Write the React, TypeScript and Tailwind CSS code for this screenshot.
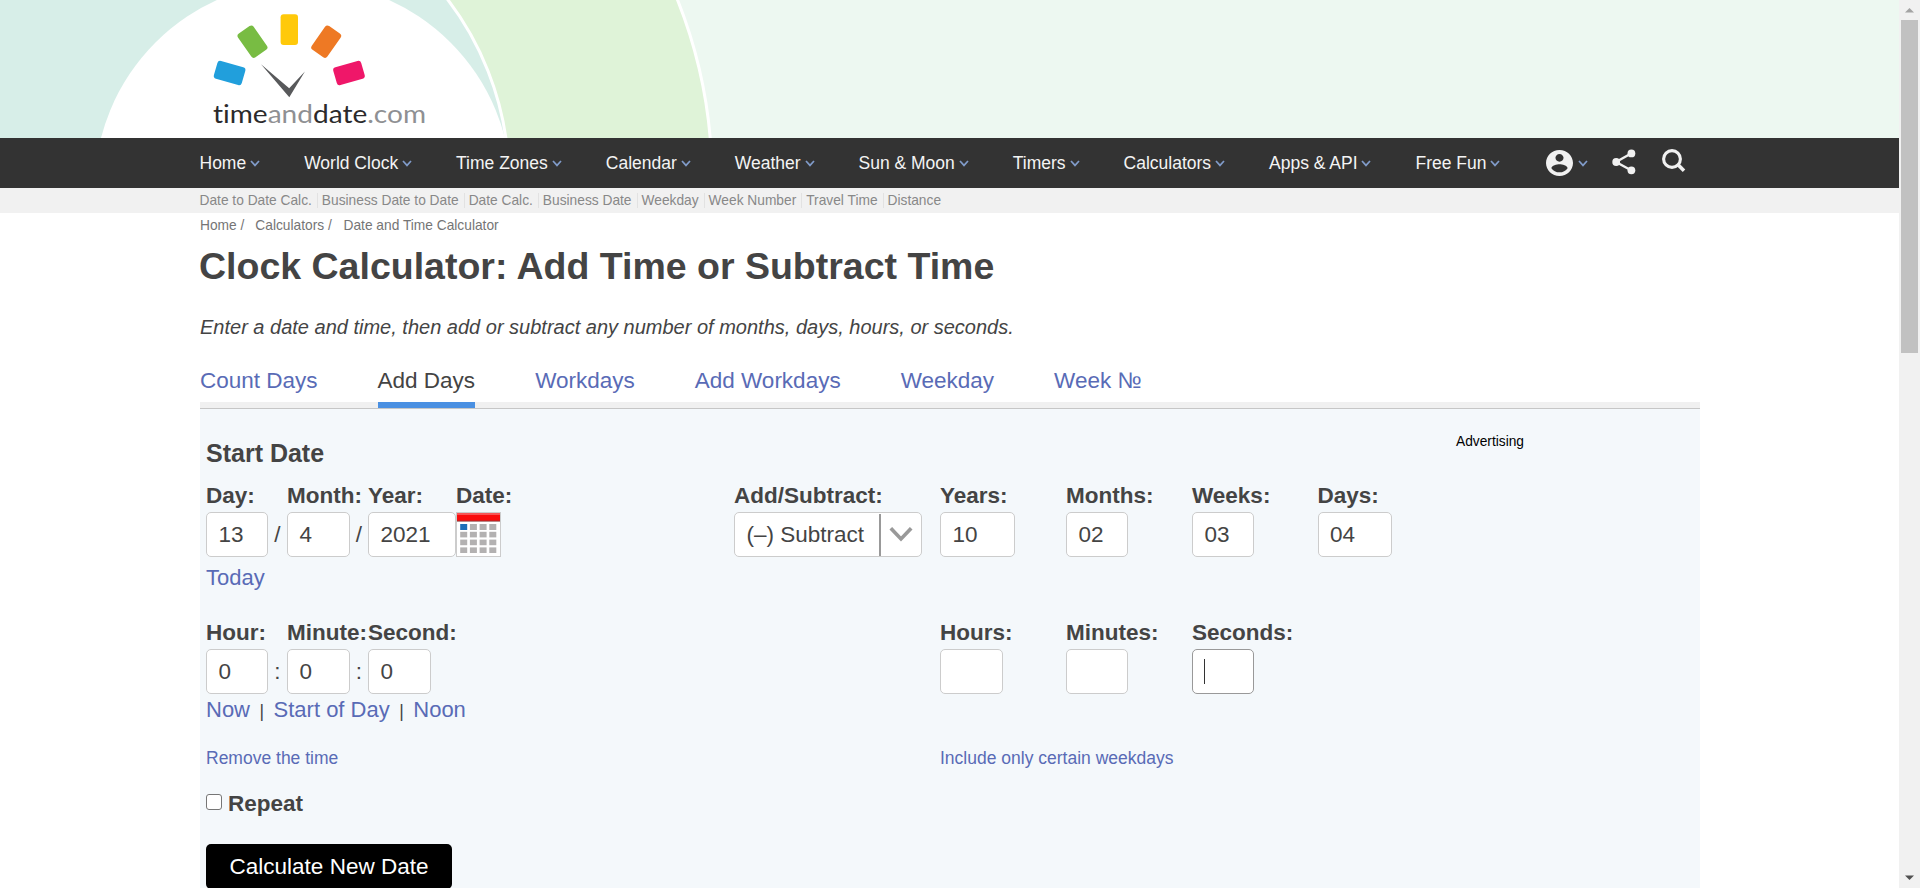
import React from "react";

const NAV = [
  "Home",
  "World Clock",
  "Time Zones",
  "Calendar",
  "Weather",
  "Sun & Moon",
  "Timers",
  "Calculators",
  "Apps & API",
  "Free Fun",
];

const SUBNAV = [
  "Date to Date Calc.",
  "Business Date to Date",
  "Date Calc.",
  "Business Date",
  "Weekday",
  "Week Number",
  "Travel Time",
  "Distance",
];

const TABS = ["Count Days", "Add Days", "Workdays", "Add Workdays", "Weekday", "Week №"];

function Caret() {
  return (
    <svg width="10" height="7" viewBox="0 0 10 7" className="shrink-0">
      <path d="M1 1 L5 5.4 L9 1" fill="none" stroke="#809bc9" strokeWidth="1.7" />
    </svg>
  );
}

function Banner() {
  return (
    <svg width="1899" height="138" viewBox="0 0 1899 138" className="block shrink-0">
      <rect width="1899" height="138" fill="#edf8f1" />
      <circle cx="224" cy="180" r="488" fill="#dff3d8" stroke="#ffffff" strokeWidth="3" />
      <circle cx="210" cy="181" r="299" fill="#d7eee8" stroke="#ffffff" strokeWidth="3" />
      <circle cx="303" cy="190" r="208.6" fill="#ffffff" />
      <rect x="280.6" y="14.3" width="17.4" height="30.6" rx="3" fill="#ffc90a" />
      <rect x="-9.5" y="-14.5" width="19" height="29" rx="3" fill="#78bc43" transform="translate(252.5 41.7) rotate(-35)" />
      <rect x="-9.5" y="-14.5" width="19" height="29" rx="3" fill="#ee7924" transform="translate(326.2 41.7) rotate(35)" />
      <rect x="-14.5" y="-9.3" width="29" height="18.6" rx="3" fill="#219fdc" transform="translate(229.6 73) rotate(16)" />
      <rect x="-14.5" y="-9.3" width="29" height="18.6" rx="3" fill="#ef1769" transform="translate(349 73) rotate(-16)" />
      <path d="M261 64.3 L289.2 88.3 L304.9 71.5 L289.3 97.2 Z" fill="#58595b" />
      <text
        x="213"
        y="122.6"
        fontFamily="Lato, sans-serif"
        fontSize="24.5"
        textLength="213"
        lengthAdjust="spacingAndGlyphs"
        className="[font-variant-ligatures:none]"
      >
        <tspan fill="#2b2a2b">time</tspan>
        <tspan fill="#8f9093">and</tspan>
        <tspan fill="#2b2a2b">date</tspan>
        <tspan fill="#8f9093">.com</tspan>
      </text>
    </svg>
  );
}

function Field({
  label,
  value,
  cell,
  box,
  focused,
  suffix,
}: {
  label: string;
  value: string;
  cell: string;
  box: string;
  focused?: boolean;
  suffix?: string;
}) {
  return (
    <div className={`shrink-0 ${cell}`}>
      <div className="h-[33px] leading-[33px] font-bold whitespace-nowrap">{label}</div>
      <div className="flex items-center">
        <div
          className={`flex h-[45px] items-center rounded-[5px] border bg-white pl-[11.5px] ${box} ${
            focused ? "border-[#999]" : "border-[#ccc]"
          }`}
        >
          {focused ? <span className="-ml-px h-[25px] w-px bg-[#333]" /> : value}
        </div>
        {suffix && <span className="flex-1 text-center">{suffix}</span>}
      </div>
    </div>
  );
}

function CalendarIcon() {
  const cells = [0, 1, 2, 3];
  return (
    <svg width="45" height="45" viewBox="0 0 45 45" className="block">
      <rect x="0.5" y="0.5" width="44" height="44" fill="#fff" stroke="#ccc" />
      <rect x="1" y="1" width="43" height="8" fill="#f90d0d" />
      <rect x="1" y="1" width="43" height="2" fill="#f95555" />
      <rect x="1" y="8.6" width="43" height="1" fill="#8b3a3a" />
      {cells.map((r) =>
        cells.map((c) => (
          <rect
            key={`${r}-${c}`}
            x={4.2 + c * 9.7}
            y={12 + r * 7.8}
            width="7"
            height={r === 0 ? 6 : 5.6}
            fill={r === 0 && c === 0 ? "#1d6fb8" : "#b3b1b1"}
          />
        ))
      )}
    </svg>
  );
}

export default function App() {
  return (
    <div className="flex h-[888px] w-[1920px] overflow-hidden bg-white font-['Liberation_Sans',Arial,sans-serif] text-[#444]">
      <div className="flex w-[1899px] shrink-0 flex-col">
        <Banner />
        <nav className="flex h-[50px] shrink-0 items-center gap-11 bg-[#333] pl-[199.5px] text-[17.5px] text-[#f4f4f4]">
          {NAV.map((n) => (
            <div key={n} className="flex items-center gap-[3.95px] whitespace-nowrap">
              {n}
              <Caret />
            </div>
          ))}
          <div className="ml-[1.5px] flex items-center gap-[5px]">
            <svg width="27" height="26" viewBox="2 2 20 20" preserveAspectRatio="none" fill="#f1f1f1">
              <path d="M12 2C6.48 2 2 6.48 2 12s4.48 10 10 10 10-4.48 10-10S17.52 2 12 2zm0 3c1.66 0 3 1.34 3 3s-1.34 3-3 3-3-1.34-3-3 1.34-3 3-3zm0 14.2c-2.5 0-4.71-1.28-6-3.22.03-1.99 4-3.08 6-3.08 1.99 0 5.97 1.09 6 3.08-1.29 1.94-3.5 3.22-6 3.22z" />
            </svg>
            <Caret />
          </div>
          <svg width="24" height="26" viewBox="0 0 24 26" className="-mt-[3px] -ml-5" fill="#f1f1f1">
            <path d="M4 13 L19.5 4.2 M4 13 L19.5 21.5" stroke="#f1f1f1" strokeWidth="2.4" />
            <circle cx="4.2" cy="13" r="3.9" />
            <circle cx="19.4" cy="4.4" r="3.9" />
            <circle cx="19.4" cy="21.3" r="3.9" />
          </svg>
          <svg width="24" height="24" viewBox="0 0 24 24" className="-mt-1 -ml-[18px]" fill="none" stroke="#f1f1f1">
            <circle cx="10" cy="10" r="8.4" strokeWidth="3.1" />
            <path d="M15.8 15.6 L22 21.8" strokeWidth="3.6" />
          </svg>
        </nav>
        <div className="flex h-[25px] shrink-0 items-center bg-[#f1f1f1] pl-[199.5px] text-[13.75px] text-[#888]">
          {SUBNAV.map((s, i) => (
            <span
              key={s}
              className={
                i < SUBNAV.length - 1
                  ? "mr-1 border-r-[1.5px] border-[#e2e2e2] pr-[5px] leading-[15px] whitespace-nowrap"
                  : "leading-[15px] whitespace-nowrap"
              }
            >
              {s}
            </span>
          ))}
        </div>
        <main className="ml-[200px] flex w-[1500px] flex-1 flex-col">
          <div className="flex h-[25px] shrink-0 items-center pt-px text-[13.75px] text-[#757575]">
            <span>Home /</span>
            <span className="ml-[11px]">Calculators /</span>
            <span className="ml-[11.75px]">Date and Time Calculator</span>
          </div>
          <h1 className="-ml-px h-[57px] shrink-0 text-[37.5px] leading-[57px] font-bold">
            Clock Calculator: Add Time or Subtract Time
          </h1>
          <p className="mt-3 h-10 shrink-0 text-[20px] leading-10 italic">
            Enter a date and time, then add or subtract any number of months, days, hours, or seconds.
          </p>
          <div className="mt-[14px] flex h-[48px] shrink-0 gap-[60px] border-b border-[#c6c6c6] text-[22.5px] leading-[40px] text-[#596bb6] shadow-[inset_0_-6px_0_#f0f0f0]">
            {TABS.map((t) => (
              <span
                key={t}
                className={
                  t === "Add Days"
                    ? "h-[47px] border-b-[6px] border-[#4a90e2] whitespace-nowrap text-[#444]"
                    : "h-[47px] whitespace-nowrap"
                }
              >
                {t}
              </span>
            ))}
          </div>
          <section className="flex flex-1 bg-[#f4f8fb] pt-[26px] pl-1.5 text-[22.5px]">
            <div className="w-[528px] shrink-0">
              <h2 className="h-9 text-[25px] leading-9 font-bold">Start Date</h2>
              <div className="mt-2 flex">
                <Field label="Day:" value="13" cell="w-[81px]" box="w-[62px]" suffix="/" />
                <Field label="Month:" value="4" cell="w-[81px]" box="w-[63px]" suffix="/" />
                <Field label="Year:" value="2021" cell="w-[88px]" box="w-[88px]" />
                <div>
                  <div className="h-[33px] leading-[33px] font-bold">Date:</div>
                  <CalendarIcon />
                </div>
              </div>
              <div className="h-[41px] text-[22px] leading-[41px] text-[#596bb6]">Today</div>
              <div className="mt-[18px] flex">
                <Field label="Hour:" value="0" cell="w-[81px]" box="w-[62px]" suffix=":" />
                <Field label="Minute:" value="0" cell="w-[81px]" box="w-[63px]" suffix=":" />
                <Field label="Second:" value="0" cell="w-[88px]" box="w-[63px]" />
              </div>
              <div className="flex h-[30px] items-center text-[22px] text-[#596bb6]">
                <span>Now</span>
                <span className="mx-[9.5px] pt-1 text-[17.5px] text-[#444]">|</span>
                <span>Start of Day</span>
                <span className="mx-[9.5px] pt-1 text-[17.5px] text-[#444]">|</span>
                <span>Noon</span>
              </div>
              <div className="mt-4 h-9 text-[17.5px] leading-9 text-[#596bb6]">Remove the time</div>
              <div className="mt-[11px] flex h-8 items-center gap-1.5 font-bold">
                <span className="mb-0.5 size-4 rounded-[3px] border border-[#767676] bg-white" />
                <span className="pt-px">Repeat</span>
              </div>
              <div className="mt-[25px] flex h-[45px] w-[246px] items-center justify-center rounded-[5px] bg-black text-white">
                Calculate New Date
              </div>
            </div>
            <div className="w-[722px] shrink-0 pt-11">
              <div className="flex">
                <div className="w-[206px] shrink-0">
                  <div className="h-[33px] leading-[33px] font-bold">Add/Subtract:</div>
                  <div className="flex h-[45px] w-[188px] items-center rounded-[5px] border border-[#ccc] bg-white pl-[11.5px]">
                    <span className="w-[132.5px] whitespace-nowrap">(–) Subtract</span>
                    <span className="mt-px h-[42px] w-0.5 bg-[#999]" />
                    <svg width="24" height="15" viewBox="0 0 24 15" className="ml-2">
                      <path d="M1.8 1.2 L12 12 L22.2 1.2" fill="none" stroke="#999" strokeWidth="3.6" />
                    </svg>
                  </div>
                </div>
                <Field label="Years:" value="10" cell="w-[126px]" box="w-[75px]" />
                <Field label="Months:" value="02" cell="w-[126px]" box="w-[62px]" />
                <Field label="Weeks:" value="03" cell="w-[125.5px]" box="w-[62px]" />
                <Field label="Days:" value="04" cell="w-[126px]" box="w-[74.5px]" />
              </div>
              <div className="mt-[59px] flex pl-[206px]">
                <Field label="Hours:" value="" cell="w-[126px]" box="w-[63px]" />
                <Field label="Minutes:" value="" cell="w-[126px]" box="w-[62px]" />
                <Field label="Seconds:" value="" cell="w-[126px]" box="w-[62px]" focused />
              </div>
              <div className="mt-[46px] h-9 pl-[206px] text-[17.5px] leading-9 text-[#596bb6]">
                Include only certain weekdays
              </div>
            </div>
            <div className="-mt-px h-4 text-[13.75px] leading-4 text-black">Advertising</div>
          </section>
        </main>
      </div>
      <div className="flex w-[21px] shrink-0 flex-col items-center justify-between bg-[#f1f1f1] py-1.5">
        <svg width="9" height="9" viewBox="0 0 9 9">
          <path d="M0 6.5 L4.5 2 L9 6.5 Z" fill="#a3a3a3" />
        </svg>
        <div className="mt-[5px] mb-auto h-[333px] w-[17px] bg-[#c1c1c1]" />
        <svg width="9" height="9" viewBox="0 0 9 9">
          <path d="M0 2.5 L4.5 7 L9 2.5 Z" fill="#505050" />
        </svg>
      </div>
    </div>
  );
}
